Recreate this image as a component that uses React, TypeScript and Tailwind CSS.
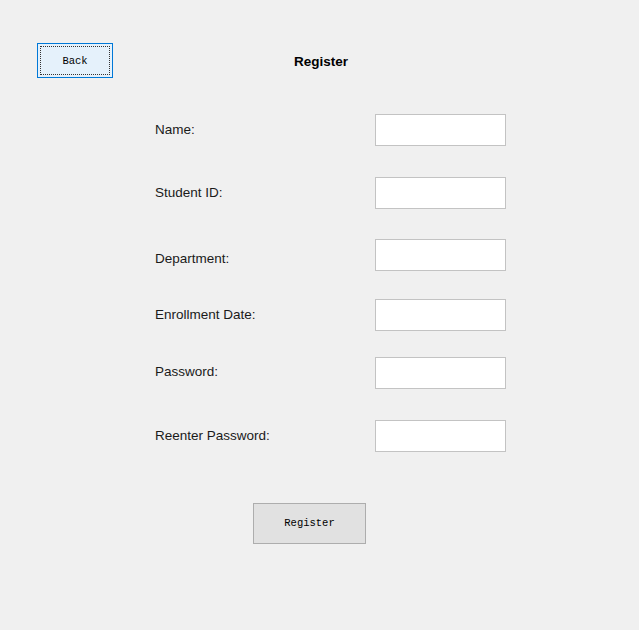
import React from 'react';

const fields = [
  { label: 'Name:', gap: 'mt-0', shift: '' },
  { label: 'Student ID:', gap: 'mt-[31px]', shift: '' },
  { label: 'Department:', gap: 'mt-[30px]', shift: 'translate-y-[4px]' },
  { label: 'Enrollment Date:', gap: 'mt-[28px]', shift: '' },
  { label: 'Password:', gap: 'mt-[26px]', shift: '-translate-y-[1px]' },
  { label: 'Reenter Password:', gap: 'mt-[31px]', shift: '' },
];

export default function App() {
  return (
    <div className="w-[639px] h-[630px] bg-[#f0f0f0] font-['Liberation_Sans',Arial,sans-serif] text-[#1a1a1a]">
      {/* header */}
      <div className="flex items-center pt-[43px] pl-[37px]">
        <button className="w-[76px] h-[35px] border border-[#0078d7] bg-[#e5f1fb] p-[2px]">
          <span className="flex h-full w-full items-center justify-center border border-dotted border-[#333] pt-[2px] font-['Liberation_Mono',monospace] text-[10.5px] text-black">
            Back
          </span>
        </button>
        <h1 className="ml-[181px] translate-y-[2px] text-[13.5px] font-bold text-black">Register</h1>
      </div>

      {/* form */}
      <div className="mt-[36px] flex flex-col">
        {fields.map((f) => (
          <div key={f.label} className={`flex h-[32px] items-center ${f.gap}`}>
            <label className={`w-[220px] pl-[155px] whitespace-nowrap text-[13.5px] ${f.shift}`}>
              {f.label}
            </label>
            <input
              type="text"
              className="ml-[155px] h-[32px] w-[131px] border border-[#c3c3c3] bg-white outline-none"
            />
          </div>
        ))}
      </div>

      <div className="mt-[51px] pl-[253px]">
        <button className="w-[113px] h-[41px] border border-[#adadad] bg-[#e1e1e1] font-['Liberation_Mono',monospace] text-[10.5px] text-black">
          Register
        </button>
      </div>
    </div>
  );
}
